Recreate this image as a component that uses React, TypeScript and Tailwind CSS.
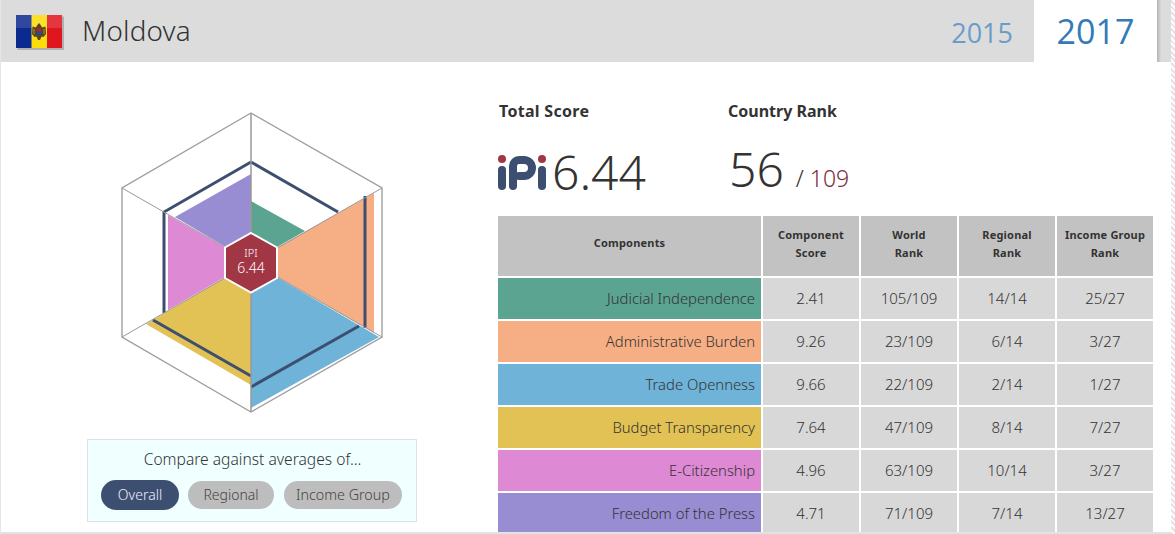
const font = '[font-family:"Noto_Sans","Open_Sans",sans-serif]';

const rows = [
  { name: 'Judicial Independence', color: 'bg-[#5ba492]', score: '2.41', world: '105/109', regional: '14/14', income: '25/27' },
  { name: 'Administrative Burden', color: 'bg-[#f6ae84]', score: '9.26', world: '23/109', regional: '6/14', income: '3/27' },
  { name: 'Trade Openness', color: 'bg-[#6fb3d9]', score: '9.66', world: '22/109', regional: '2/14', income: '1/27' },
  { name: 'Budget Transparency', color: 'bg-[#e2c254]', score: '7.64', world: '47/109', regional: '8/14', income: '7/27' },
  { name: 'E-Citizenship', color: 'bg-[#de89d3]', score: '4.96', world: '63/109', regional: '10/14', income: '3/27' },
  { name: 'Freedom of the Press', color: 'bg-[#988dd2]', score: '4.71', world: '71/109', regional: '7/14', income: '13/27' },
];

function Flag() {
  return (
    <svg width="48" height="35" viewBox="0 0 48 35" className="mt-[2px] shrink-0">
      <rect x="1.5" y="1.5" width="46.5" height="33.5" fill="#b0b0b0" />
      <rect x="0" y="0" width="46" height="33" fill="#fcdd09" />
      <rect x="0" y="0" width="15.5" height="33" fill="#0b2a8f" />
      <rect x="31" y="0" width="15" height="33" fill="#e0161f" />
      <rect x="0" y="0" width="46" height="13" fill="#fff" opacity="0.14" />
      {/* coat of arms */}
      <path d="M23 8 L25 10.5 L26 12.5 L29.5 11.5 L30 19 L27.5 22 L25.5 21.5 L24 25 L22 25 L20.5 21.5 L18.5 22 L16 19 L16.5 11.5 L20 12.5 L21 10.5 Z" fill="#5a4320" />
      <rect x="20.5" y="13.5" width="5" height="3" fill="#b3262a" />
      <rect x="20.5" y="16.5" width="5" height="3" fill="#1e4d9b" />
      <path d="M18 14 V19 M28 14 V19" stroke="#c9a93a" strokeWidth="0.8" />
    </svg>
  );
}

function IpiLogo() {
  return (
    <svg width="49" height="36" viewBox="498 153 49 36" className="mt-[1px] shrink-0">
      <circle cx="502" cy="157" r="4" fill="#a13645" />
      <path d="M502 168 V184" stroke="#3d4f70" strokeWidth="8" strokeLinecap="round" fill="none" />
      <path d="M513 184 V164 a6 6 0 0 1 6 -6 h5 a8 8 0 0 1 0 16 h-5" stroke="#3d4f70" strokeWidth="8" strokeLinecap="round" fill="none" />
      <circle cx="542" cy="157" r="4" fill="#a13645" />
      <path d="M542 168 V184" stroke="#3d4f70" strokeWidth="8" strokeLinecap="round" fill="none" />
    </svg>
  );
}

function Radar() {
  return (
    <svg width="497" height="377" viewBox="1 62 497 377" className="block">
      <polygon points="251,113 382,188 382,337 251,412 122,337 122,188" fill="#fff" stroke="#a0a0a0" strokeWidth="1.4" />
      <polygon points="251,262 251,201 305,231" fill="#5ba492" />
      <polygon points="251,262 374,193 374,333" fill="#f6ae84" />
      <polygon points="251,262 379,337 251,408" fill="#6fb3d9" />
      <polygon points="251,262 251,385 146,324" fill="#e2c254" />
      <polygon points="251,262 168,310 168,215" fill="#de89d3" />
      <polygon points="251,262 175,217 251,174" fill="#988dd2" />
      <g stroke="#3d4f70" strokeWidth="3" fill="none">
        <path d="M251 162 L338 212" />
        <path d="M365 196 V328" />
        <path d="M359 326 L251 387" />
        <path d="M251 376 L153 320" />
        <path d="M164 313 V212 L251 162" />
      </g>
      <g stroke="#999" strokeWidth="1">
        <path d="M251 113 V412" strokeWidth="1.5" />
        <path d="M122 188 L382 337" />
        <path d="M382 188 L122 337" />
      </g>
      <polygon points="251,233 277,247.5 277,278 251,292.5 225,278 225,247.5" fill="#a13645" stroke="#fff" strokeWidth="2" />
      <text x="251" y="257" textAnchor="middle" fontSize="11" fill="#fff" fontFamily="Noto Sans, sans-serif" fontWeight="300">IPI</text>
      <text x="251" y="273" textAnchor="middle" fontSize="14" fill="#fff" fontFamily="Noto Sans, sans-serif" fontWeight="300">6.44</text>
    </svg>
  );
}

export default function App() {
  return (
    <div className={`flex h-[534px] w-[1175px] overflow-hidden bg-white ${font}`}>
      <div className="h-full w-px shrink-0 bg-[#e6e6e6]" />
      <div className="flex h-[534px] min-w-0 flex-1 flex-col border-b-2 border-[#e2e2e2]">
        {/* Header */}
        <div className="flex h-[62px] shrink-0 items-stretch bg-[#dcdcdc]">
          <div className="ml-[15px] flex items-center">
            <Flag />
          </div>
          <div className="ml-[18px] flex items-center pb-[1px] text-[27.8px] leading-none font-light tracking-[0.2px] text-[#333]">Moldova</div>
          <div className="ml-auto mr-[21px] flex items-center pt-[3px] [font-family:'Open_Sans',sans-serif] text-[27px] leading-none text-[#6b9cc9]">2015</div>
          <div className="flex w-[123px] items-center justify-center bg-white pb-[1px] [font-family:'Open_Sans',sans-serif] text-[34px] leading-none text-[#337ab7]">2017</div>
          <div className="w-[14px] bg-gradient-to-r from-[#b4b4b4] from-0% via-[#dcdcdc] via-30% to-[#dcdcdc]" />
        </div>

        <div className="flex min-h-0 flex-1">
          {/* Left column */}
          <div className="w-[497px] shrink-0">
            <Radar />
            <div className="ml-[86px] flex h-[83px] w-[330px] flex-col items-center border border-[#dde3e3] bg-[#f0ffff] pt-[9px]">
              <div className="pl-[1px] text-[15.6px] leading-[20px] font-light text-[#333]">Compare against averages of...</div>
              <div className="mt-[11px] flex items-center gap-[9px] pr-[1px]">
                <div className="flex h-[30px] w-[78px] items-center justify-center rounded-full bg-[#3d4f70] pb-px text-[14px] font-light text-[#eef]">Overall</div>
                <div className="flex h-[28px] w-[86px] items-center justify-center rounded-full bg-[#bdbdbd] pb-px text-[14px] font-light text-[#444]">Regional</div>
                <div className="ml-px flex h-[28px] w-[118px] items-center justify-center rounded-full bg-[#bdbdbd] pb-px text-[14.3px] font-light text-[#444]">Income Group</div>
              </div>
            </div>
          </div>

          {/* Right column */}
          <div className="min-w-0 flex-1 overflow-hidden">
            <div className="flex h-[154px] pt-[38px]">
              <div className="w-[230px]">
                <div className="ml-px text-[16px] leading-[22px] font-bold tracking-[0.3px] text-[#333]">Total Score</div>
                <div className="mt-[25px] flex items-center">
                  <IpiLogo />
                  <span className="ml-[5px] text-[48px] leading-[50px] font-light text-[#333]">6.44</span>
                </div>
              </div>
              <div>
                <div className="text-[16px] leading-[22px] font-bold text-[#333]">Country Rank</div>
                <div className="mt-[22px] flex items-baseline">
                  <span className="ml-px text-[48px] leading-[50px] font-light text-[#333]">56</span>
                  <span className="ml-[12px] text-[23px] font-light text-[#333]">/</span>
                  <span className="ml-[6px] text-[23px] font-light text-[#7a2f3a]">109</span>
                </div>
              </div>
            </div>

            <div className="grid grid-cols-[263px_96px_96px_96px_96px] grid-rows-[60px_repeat(6,41px)] gap-[2px] text-[#333]">
              <div className="flex items-center justify-center bg-[#c2c2c2] pb-[6px] text-[11px] font-bold tracking-[0.2px]">Components</div>
              <div className="flex flex-col items-center justify-center bg-[#c2c2c2] pb-[4px] text-[11px] leading-[18px] font-bold tracking-[0.2px]">
                <span>Component</span>
                <span>Score</span>
              </div>
              <div className="flex flex-col items-center justify-center bg-[#c2c2c2] pb-[4px] text-[11px] leading-[18px] font-bold tracking-[0.2px]">
                <span>World</span>
                <span>Rank</span>
              </div>
              <div className="flex flex-col items-center justify-center bg-[#c2c2c2] pb-[4px] text-[11px] leading-[18px] font-bold tracking-[0.2px]">
                <span>Regional</span>
                <span>Rank</span>
              </div>
              <div className="flex flex-col items-center justify-center bg-[#c2c2c2] pb-[4px] text-[11px] leading-[18px] font-bold tracking-[0.2px]">
                <span>Income Group</span>
                <span>Rank</span>
              </div>
              {rows.map(r => (
                <div key={r.name} className="contents">
                  <div className={`flex items-center justify-end pr-[6px] text-[14.8px] font-light ${r.color}`}>{r.name}</div>
                  <div className="flex items-center justify-center bg-[#d8d8d8] text-[15px] font-light">{r.score}</div>
                  <div className="flex items-center justify-center bg-[#d8d8d8] text-[15px] font-light">{r.world}</div>
                  <div className="flex items-center justify-center bg-[#d8d8d8] text-[15px] font-light">{r.regional}</div>
                  <div className="flex items-center justify-center bg-[#d8d8d8] text-[15px] font-light">{r.income}</div>
                </div>
              ))}
            </div>
          </div>
        </div>
      </div>
      <div className="h-full w-[4px] shrink-0 bg-[repeating-linear-gradient(45deg,#e4e4e4_0,#e4e4e4_2px,#fff_2px,#fff_4px)]" />
    </div>
  );
}
